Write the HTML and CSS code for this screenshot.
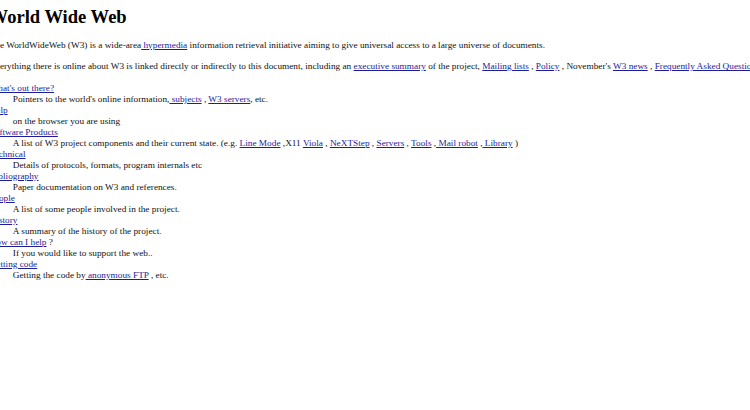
FILE: index.html
```html
<!DOCTYPE html>
<html>
<head>
<meta charset="utf-8">
<title>The World Wide Web project</title>
<link rel="stylesheet" href="styles.css">
</head>
<body>
<div class="page">
<h1 class="title">World Wide Web</h1>
<div class="intro">The WorldWideWeb (W3) is a wide-area<a href="#"> hypermedia</a> information retrieval initiative aiming to give universal access to a large universe of documents.</div>
<p class="para">Everything there is online about W3 is linked directly or indirectly to this document, including an <a href="#">executive summary</a> of the project, <a href="#">Mailing lists</a> , <a href="#">Policy</a> , November's <a href="#">W3 news</a> , <a href="#">Frequently Asked Questions</a> .</p>
<dl class="list">
<dt><a href="#">What's out there?</a></dt>
<dd> Pointers to the world's online information,<a href="#"> subjects</a> , <a href="#">W3 servers</a>, etc.</dd>
<dt><a href="#">Help</a></dt>
<dd> on the browser you are using</dd>
<dt><a href="#">Software Products</a></dt>
<dd> A list of W3 project components and their current state. (e.g. <a href="#">Line Mode</a> ,X11 <a href="#">Viola</a> , <a href="#">NeXTStep</a> , <a href="#">Servers</a> , <a href="#">Tools</a> ,<a href="#"> Mail robot</a> ,<a href="#"> Library</a> )</dd>
<dt><a href="#">Technical</a></dt>
<dd> Details of protocols, formats, program internals etc</dd>
<dt><a href="#">Bibliography</a></dt>
<dd> Paper documentation on W3 and references.</dd>
<dt><a href="#">People</a></dt>
<dd> A list of some people involved in the project.</dd>
<dt><a href="#">History</a></dt>
<dd> A summary of the history of the project.</dd>
<dt><a href="#">How can I help</a> ?</dt>
<dd> If you would like to support the web..</dd>
<dt><a href="#">Getting code</a></dt>
<dd> Getting the code by<a href="#"> anonymous FTP</a> , etc.</dd>
</dl>
</div>
</body>
</html>
```
FILE: styles.css
```css
html, body {
  margin: 0;
  padding: 0;
  background: #ffffff;
  overflow: hidden;
}
.page {
  width: 1100px;
  margin-left: -10.4px;
  padding-top: 4.5px;
  font-family: "Liberation Serif", "Times New Roman", serif;
  font-size: 9.28px;
  line-height: 11px;
  color: #111111;
}
.title {
  margin: 0 0 10.5px 0;
  font-size: 18.56px;
  line-height: 24px;
  font-weight: bold;
  color: #000000;
}
.intro {
  margin: 0;
  padding-top: 0.5px;
}
.para {
  margin: 10.7px 0;
  white-space: nowrap;
}
.list {
  margin: 9.9px 0;
}
.list dt {
  margin: 0;
}
.list dd {
  margin: 0 0 0 23.2px;
}
a {
  color: #1c1c9c;
  text-decoration: underline;
}
```
